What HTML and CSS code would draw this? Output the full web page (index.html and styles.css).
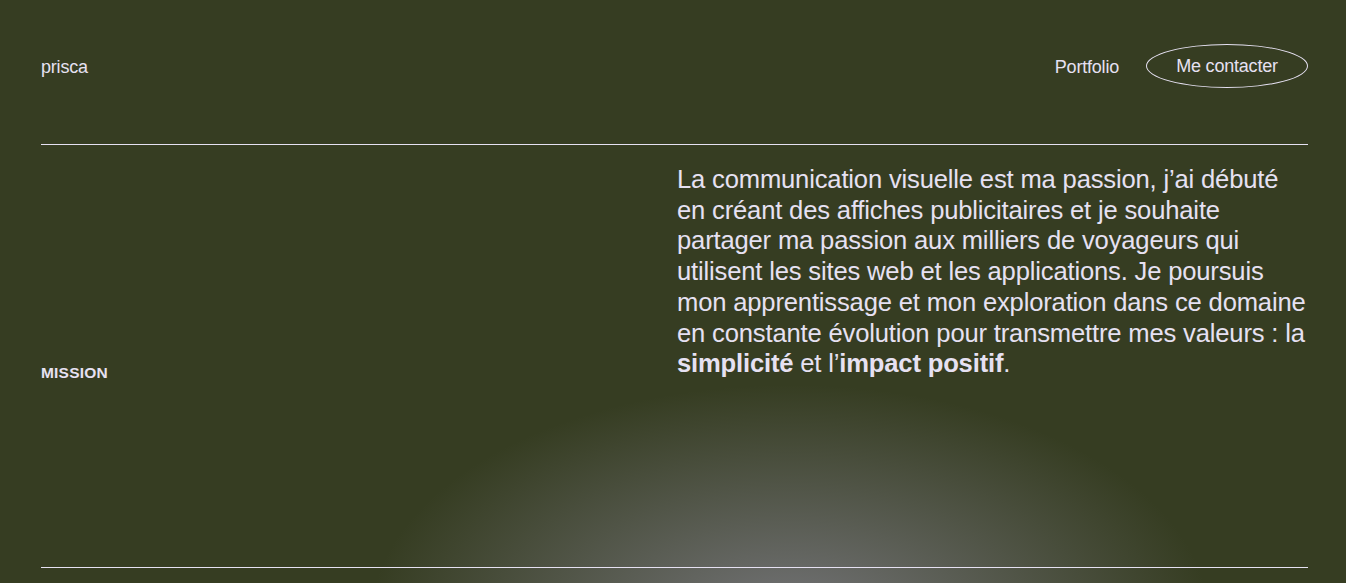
FILE: index.html
```html
<!DOCTYPE html>
<html lang="fr">
<head>
<meta charset="utf-8">
<title>prisca</title>
<link rel="stylesheet" href="styles.css">
</head>
<body>
<div class="page">
  <header class="header">
    <a class="logo" href="#">prisca</a>
    <nav class="nav">
      <a class="nav-link" href="#">Portfolio</a>
      <a class="nav-btn" href="#">Me contacter</a>
    </nav>
  </header>
  <section class="mission">
    <h2 class="label">MISSION</h2>
    <p class="text">La communication visuelle est ma passion, j’ai débuté en créant des affiches publicitaires et je souhaite partager ma passion aux milliers de voyageurs qui utilisent les sites web et les applications. Je poursuis mon apprentissage et mon exploration dans ce domaine en constante évolution pour transmettre mes valeurs : la <strong>simplicité</strong> et l’<strong>impact positif</strong>.</p>
  </section>
</div>
</body>
</html>
```
FILE: styles.css
```css
* { box-sizing: border-box; }
html, body { margin: 0; height: 100%; }
body {
  background-color: #363d22;
  background-image: radial-gradient(ellipse 420px 235px at 790px 620px, rgba(116,116,120,1) 0%, rgba(54,61,34,0) 100%);
  background-repeat: no-repeat;
  color: #e6e1f2;
  font-family: "Liberation Sans", Arial, sans-serif;
  overflow: hidden;
}
.page {
  padding: 0 38px 0 41px;
}
.header {
  display: flex;
  justify-content: space-between;
  align-items: center;
  padding: 44px 0 56px;
  border-bottom: 1px solid #e6e1f2;
}
.logo, .nav-link, .nav-btn {
  color: #e6e1f2;
  text-decoration: none;
  font-size: 18px;
  letter-spacing: -0.2px;
}
.logo { line-height: 20px; margin-top: 2px; }
.nav {
  display: flex;
  align-items: center;
  gap: 27px;
}
.nav-link { margin-top: 2px; }
.nav-btn {
  display: flex;
  align-items: center;
  justify-content: center;
  width: 162px;
  height: 44px;
  border: 1px solid #e6e1f2;
  border-radius: 50%;
}
.mission {
  display: grid;
  grid-template-columns: 1fr 631px;
  align-items: end;
  align-content: start;
  min-height: 423px;
  padding-top: 19px;
  border-bottom: 1px solid #e6e1f2;
}
.label {
  margin: 0 0 -2px;
  font-size: 15.5px;
  font-weight: 700;
  letter-spacing: 0.2px;
  line-height: 17px;
}
.text {
  margin: 0 -4px 0 0;
  font-size: 25.6px;
  line-height: 30.72px;
  letter-spacing: -0.17px;
}
.text strong { font-weight: 700; }
```
